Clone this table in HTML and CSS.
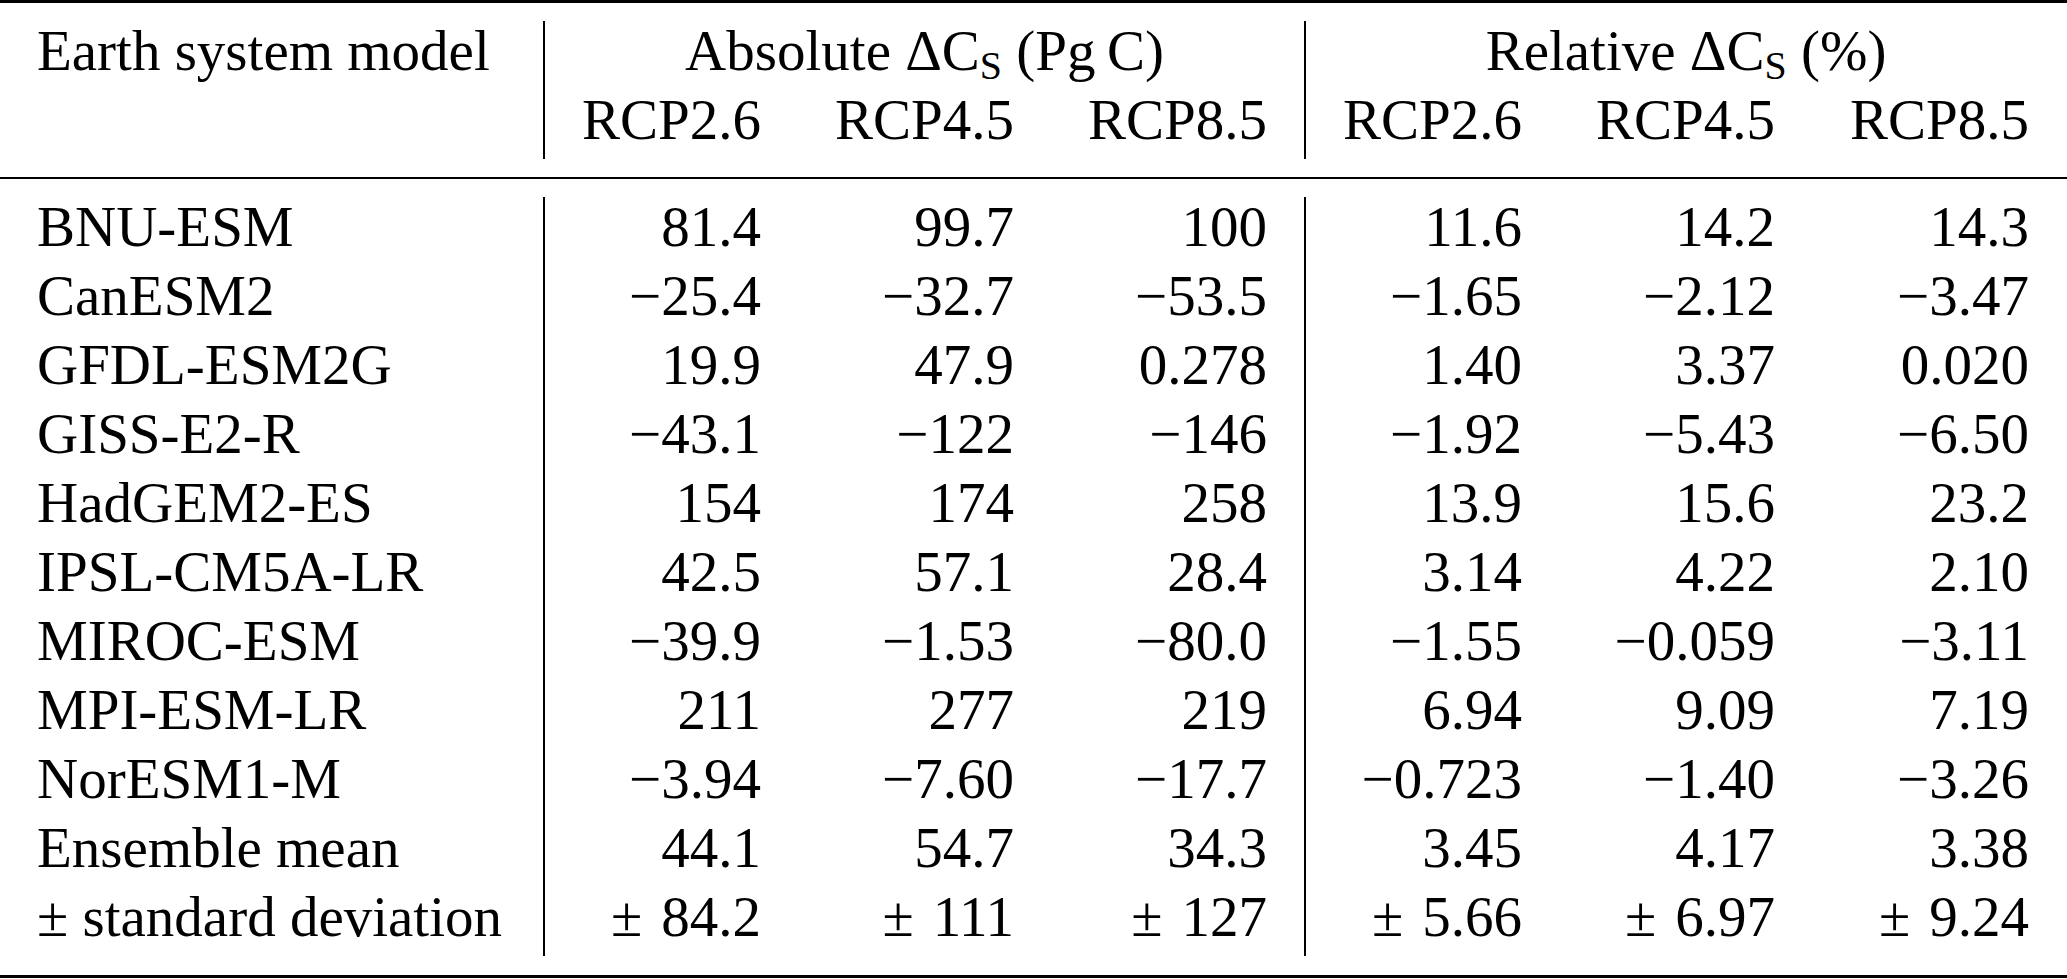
FILE: index.html
```html
<!DOCTYPE html>
<html lang="en">
<head>
<meta charset="utf-8">
<title>Soil carbon change by Earth system model</title>
<link rel="stylesheet" href="styles.css">
</head>
<body>
<table class="results">
  <colgroup>
    <col class="w-model">
    <col class="w-sep">
    <col class="w-num">
    <col class="w-num">
    <col class="w-sep">
    <col class="w-num">
    <col class="w-last">
  </colgroup>
  <thead>
    <tr class="gap gap-top"><td colspan="7"></td></tr>
    <tr>
      <th class="model">Earth system model</th>
      <th class="group sep" colspan="3">Absolute &Delta;C<span class="sub">S</span> (Pg&#8201;C)</th>
      <th class="group sep last" colspan="3">Relative &Delta;C<span class="sub">S</span> (%)</th>
    </tr>
    <tr>
      <th class="model"></th>
      <th class="sep">RCP2.6</th>
      <th>RCP4.5</th>
      <th>RCP8.5</th>
      <th class="sep">RCP2.6</th>
      <th>RCP4.5</th>
      <th class="last">RCP8.5</th>
    </tr>
    <tr class="gap gap-mid"><td colspan="7"></td></tr>
  </thead>
  <tbody>
    <tr class="gap gap-body"><td colspan="7"></td></tr>
    <tr><td class="model">BNU-ESM</td><td class="sep">81.4</td><td>99.7</td><td>100</td><td class="sep">11.6</td><td>14.2</td><td class="last">14.3</td></tr>
    <tr><td class="model">CanESM2</td><td class="sep">&minus;25.4</td><td>&minus;32.7</td><td>&minus;53.5</td><td class="sep">&minus;1.65</td><td>&minus;2.12</td><td class="last">&minus;3.47</td></tr>
    <tr><td class="model">GFDL-ESM2G</td><td class="sep">19.9</td><td>47.9</td><td>0.278</td><td class="sep">1.40</td><td>3.37</td><td class="last">0.020</td></tr>
    <tr><td class="model">GISS-E2-R</td><td class="sep">&minus;43.1</td><td>&minus;122</td><td>&minus;146</td><td class="sep">&minus;1.92</td><td>&minus;5.43</td><td class="last">&minus;6.50</td></tr>
    <tr><td class="model">HadGEM2-ES</td><td class="sep">154</td><td>174</td><td>258</td><td class="sep">13.9</td><td>15.6</td><td class="last">23.2</td></tr>
    <tr><td class="model">IPSL-CM5A-LR</td><td class="sep">42.5</td><td>57.1</td><td>28.4</td><td class="sep">3.14</td><td>4.22</td><td class="last">2.10</td></tr>
    <tr><td class="model">MIROC-ESM</td><td class="sep">&minus;39.9</td><td>&minus;1.53</td><td>&minus;80.0</td><td class="sep">&minus;1.55</td><td>&minus;0.059</td><td class="last">&minus;3.11</td></tr>
    <tr><td class="model">MPI-ESM-LR</td><td class="sep">211</td><td>277</td><td>219</td><td class="sep">6.94</td><td>9.09</td><td class="last">7.19</td></tr>
    <tr><td class="model">NorESM1-M</td><td class="sep">&minus;3.94</td><td>&minus;7.60</td><td>&minus;17.7</td><td class="sep">&minus;0.723</td><td>&minus;1.40</td><td class="last">&minus;3.26</td></tr>
    <tr><td class="model">Ensemble mean</td><td class="sep">44.1</td><td>54.7</td><td>34.3</td><td class="sep">3.45</td><td>4.17</td><td class="last">3.38</td></tr>
    <tr><td class="model">&plusmn; standard deviation</td><td class="sep">&plusmn;&#8196;84.2</td><td>&plusmn;&#8196;111</td><td>&plusmn;&#8196;127</td><td class="sep">&plusmn;&#8196;5.66</td><td>&plusmn;&#8196;6.97</td><td class="last">&plusmn;&#8196;9.24</td></tr>
    <tr class="gap gap-bottom"><td colspan="7"></td></tr>
  </tbody>
</table>
</body>
</html>
```

FILE: styles.css
```css
html, body {
  margin: 0;
  padding: 0;
  background: #ffffff;
}

body {
  font-family: "Liberation Serif", "Times New Roman", serif;
  color: #000000;
}

.results {
  width: 2067px;
  table-layout: fixed;
  border-collapse: separate;
  border-spacing: 0;
  font-size: 57px;
}

.w-model { width: 543px; }
.w-sep { width: 255px; }
.w-num { width: 253px; }
.w-last { width: 257px; }

.results th,
.results td {
  padding: 0 37px 9px 0;
  line-height: 60px;
  text-align: right;
  font-weight: normal;
  white-space: nowrap;
  vertical-align: baseline;
}

.results .model {
  text-align: left;
  padding-left: 37px;
  padding-right: 0;
}

.results .sep {
  border-left: 2px solid #000000;
}

.results .last {
  padding-right: 40px;
}

.results .group {
  text-align: center;
  padding-left: 37px;
}

.sub {
  font-size: 0.7em;
  line-height: 0;
  vertical-align: -9px;
}

.results .gap td {
  padding: 0;
  line-height: 0;
  font-size: 0;
}

.results .gap-top td {
  height: 18px;
  border-top: 3px solid #000000;
}

.results .gap-mid td {
  height: 18px;
  border-bottom: 2px solid #000000;
}

.results .gap-body td {
  height: 18px;
}

.results .gap-bottom td {
  height: 19px;
  border-bottom: 3px solid #000000;
}
```
